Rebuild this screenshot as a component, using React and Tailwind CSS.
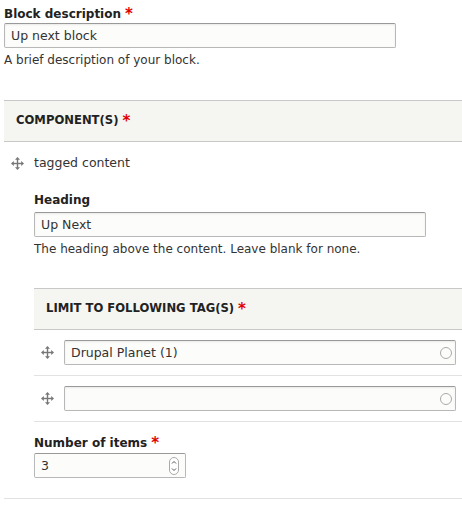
import { useState } from 'react';

const font = { fontFamily: '"DejaVu Sans", "Liberation Sans", sans-serif' };

const Star = () => <span className="text-[#e00000] ml-1 text-[15px] leading-none align-top">*</span>;

const DragHandle = () => (
  <svg width="13" height="13" viewBox="0 0 13 13" className="shrink-0" fill="#777">
    <rect x="5.8" y="2" width="1.4" height="9" />
    <rect x="2" y="5.8" width="9" height="1.4" />
    <path d="M6.5 0 L9 2.8 L4 2.8 Z" />
    <path d="M6.5 13 L9 10.2 L4 10.2 Z" />
    <path d="M0 6.5 L2.8 4 L2.8 9 Z" />
    <path d="M13 6.5 L10.2 4 L10.2 9 Z" />
  </svg>
);

const Throbber = () => (
  <span className="absolute right-[4px] top-1/2 -translate-y-1/2 w-[12px] h-[12px] rounded-full border-[1.5px] border-[#aaa]" />
);

const TextInput = ({ value, width, autocomplete }) => (
  <div className={`relative ${width}`}>
    <input
      type="text"
      defaultValue={value}
      style={font}
      className="w-full h-[25px] border border-[#b8b8b8] border-t-[#999] rounded-[2px] bg-[#fcfcfa] px-[6px] text-[12.5px] text-[#333] outline-none shadow-[inset_0_1px_2px_rgba(0,0,0,0.08)]"
    />
    {autocomplete && <Throbber />}
  </div>
);

const SectionHeader = ({ children }) => (
  <div className="h-[42px] bg-[#f5f5f2] border-t border-b border-[#c8c8c8] flex items-center pl-3 text-[11.6px] font-bold text-[#222] uppercase">
    {children}
    <Star />
  </div>
);

export default function App() {
  const [count, setCount] = useState('3');

  return (
    <div style={font} className="w-[462px] h-[505px] bg-white text-[#333] pl-1 overflow-hidden">
      {/* block description */}
      <div className="pt-[6px]">
        <label className="flex items-center h-4 text-[12px] font-bold text-[#222]">
          Block description
          <Star />
        </label>
        <div className="mt-[1px]">
          <TextInput value="Up next block" width="w-[392px]" />
        </div>
        <p className="text-[12px] mt-[4px] leading-4">A brief description of your block.</p>
      </div>

      {/* components */}
      <div className="mt-[32px]">
        <SectionHeader>Component(s)</SectionHeader>
        <div className="flex items-center gap-[10px] h-[42px] pl-[7px] text-[12.5px]">
          <DragHandle />
          <span>tagged content</span>
        </div>

        <div className="pl-[30px]">
          <label className="flex items-center h-4 text-[12px] font-bold text-[#222] mt-[8px]">Heading</label>
          <div className="mt-[4px]">
            <TextInput value="Up Next" width="w-[392px]" />
          </div>
          <p className="text-[12px] mt-[4px] leading-4">The heading above the content. Leave blank for none.</p>

          <div className="mt-[31px]">
            <SectionHeader>Limit to following tag(s)</SectionHeader>
            <div className="flex items-center h-[46px] border-b border-[#e2e2e2] pl-[7px] gap-[10px]">
              <DragHandle />
              <TextInput value="Drupal Planet (1)" width="w-[392px]" autocomplete />
            </div>
            <div className="flex items-center h-[46px] border-b border-[#e2e2e2] pl-[7px] gap-[10px]">
              <DragHandle />
              <TextInput value="" width="w-[392px]" autocomplete />
            </div>
          </div>

          <label className="flex items-center h-4 text-[12px] font-bold text-[#222] mt-[13px]">
            Number of items
            <Star />
          </label>
          <div className="relative w-[152px] mt-[2px]">
            <input
              type="text"
              value={count}
              onChange={(e) => setCount(e.target.value)}
              style={font}
              className="w-full h-[25px] border border-[#b8b8b8] border-t-[#999] rounded-[2px] bg-[#fcfcfa] px-[6px] text-[12.5px] text-[#333] outline-none"
            />
            <svg width="10" height="18" viewBox="0 0 10 18" className="absolute right-[7px] top-[3.5px]">
              <rect x="0.5" y="0.5" width="9" height="17" rx="4.5" fill="#fff" stroke="#aaa" />
              <path d="M3 6.5 L5 4.5 L7 6.5" fill="none" stroke="#555" strokeWidth="1" />
              <path d="M3 11.5 L5 13.5 L7 11.5" fill="none" stroke="#555" strokeWidth="1" />
            </svg>
          </div>
        </div>

        <div className="mt-[20px] border-b border-[#e2e2e2]" />
      </div>
    </div>
  );
}
